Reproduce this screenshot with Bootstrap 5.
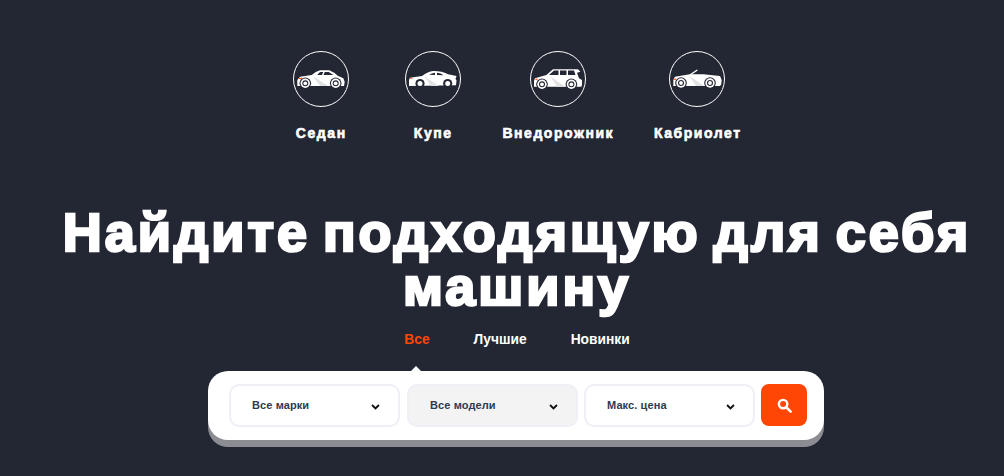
<!DOCTYPE html>
<html lang="ru">
<head>
    <meta charset="UTF-8">
    <meta name="viewport" content="width=device-width, initial-scale=1.0">
    <title>Найдите машину</title>
    <link href="https://cdn.jsdelivr.net/npm/bootstrap@5.3.0/dist/css/bootstrap.min.css" rel="stylesheet">
    <style>
        html { overflow: hidden; }
        body { background: #232733; font-family: "Liberation Sans", Arial, sans-serif; color: #fff; }
        .hero { width: 1034px; padding: 51px 0 36px; }
        .types { column-gap: 40px; margin-left: 2px; }
        .type-item { font-size: 14px; font-weight: 700; color: #fff; text-decoration: none; letter-spacing: 1.55px; text-indent: 1.5px; -webkit-text-stroke: .6px #fff; }
        .type-item svg { display: block; width: 56px; height: 56px; margin-bottom: 16px; }
        .type-sedan { width: 50px; margin-right: 28px; }
        .type-coupe { width: 38px; margin-right: 10px; }
        .type-suv { width: 112px; }
        .type-cabrio { width: 87px; }
        .hero-title { font-family: "Liberation Sans", Arial, sans-serif; font-size: 54px; line-height: 54px; font-weight: 700; letter-spacing: 3px; word-spacing: -5px; -webkit-text-stroke: 2.6px #fff; margin: 61px 0 0; }
        .tabs { column-gap: 44px; margin-top: 19px; font-size: 13.8px; font-weight: 700; line-height: 16px; }
        .tabs a { color: #fff; text-decoration: none; }
        .tabs a.active { color: #ff4605; }
        .search-panel { width: 616px; height: 69px; margin: 23px 0 0 208px; background: #fff; border-radius: 20px; box-shadow: 0 7px 0 #8c8d92; padding: 13px 17px 0 21px; column-gap: 6px; }
        .search-panel::before { content: ""; position: absolute; left: 203px; top: -5px; border: 5px solid transparent; border-top: 0; border-bottom-color: #fff; }
        .search-panel .form-select { flex: 0 0 171px; width: 171px; height: 43px; border: 2px solid #eef0f6; border-radius: 10px; padding: 0 30px 0 21px; font-size: 11px; font-weight: 700; letter-spacing: .1px; color: #2d3a50; background-position: right 18.5px top 18px; background-size: 9px 6px; background-image: url("data:image/svg+xml,%3Csvg xmlns='http://www.w3.org/2000/svg' viewBox='0 0 10 7'%3E%3Cpath d='M1 1.2l4 4 4-4' fill='none' stroke='%23111' stroke-width='2.200'/%3E%3C/svg%3E"); }
        .search-panel .form-select:first-of-type { margin-right: 1px; }
        .search-panel .form-select.muted { background-color: #f3f3f3; }
        .btn-search { width: 46px; height: 42px; padding: 0; border: 0; border-radius: 8px; background: #ff4605; }
        .btn-search:hover { background: #ff4605; }
        .btn-search svg { width: 15px; height: 15px; }
    </style>
</head>
<body>
    <div class="hero text-center">
        <div class="types d-flex justify-content-center align-items-start">
            <a href="#" class="type-item type-sedan d-flex flex-column align-items-center text-nowrap">
                <svg viewBox="0 0 56 56">
                    <circle cx="28" cy="28" r="27.5" fill="none" stroke="#fff"/>
                    <path fill="#fff" d="M4.300 35v-6l2.700-3.300 11.700-1.700q4-3.600 8.300-4.800h9.300q4.500 1.800 8.400 5.500l5.600 2.600 1.400 3.400-.7 4.300z"/>
                    <path fill="#e2e2e5" d="M20 25l15 10h-8z"/>
                    <path fill="#232733" d="M27 21h3.300l-1.400 3h-4.700zM31.800 21h3.900l4.700 3.100H30.500z"/>
                    <path fill="#ff5a1f" d="M6 27l2.800-.4v1.300H5.300z"/>
                    <circle cx="12.300" cy="32.300" r="5.800" fill="#232733"/>
                    <circle cx="12.300" cy="32.300" r="4.700" fill="#fff"/>
                    <circle cx="12.300" cy="32.300" r="3" fill="#232733"/>
                    <circle cx="12.300" cy="32.300" r="1.900" fill="#fff"/>
                    <circle cx="42.700" cy="32.300" r="5.800" fill="#232733"/>
                    <circle cx="42.700" cy="32.300" r="4.700" fill="#fff"/>
                    <circle cx="42.700" cy="32.300" r="3" fill="#232733"/>
                    <circle cx="42.700" cy="32.300" r="1.900" fill="#fff"/>
                </svg>
                Седан
            </a>
            <a href="#" class="type-item type-coupe d-flex flex-column align-items-center text-nowrap">
                <svg viewBox="0 0 56 56">
                    <circle cx="28" cy="28" r="27.500" fill="none" stroke="#fff"/>
                    <path fill="#fff" d="M4 35v-6l1-2.300 12-1.700q6-4.300 11-5 8-.3 15 3.300l8.500 1.700-1 3 1 1.300-.5 5z"/>
                    <path fill="#e2e2e5" d="M19 25l15 10h-8z"/>
                    <path fill="#232733" d="M32 21.800q4 .2 6.500 2.400L32 24zM24 23.800q2.800-1.800 6-2.100V24z"/>
                    <path fill="#ff5a1f" d="M5 27l2.500-.4v1.200H4.700z"/>
                    <circle cx="15" cy="32.500" r="4.600" fill="#232733"/>
                    <circle cx="15" cy="32.500" r="2.500" fill="#fff"/>
                    <circle cx="42.700" cy="32.500" r="4.600" fill="#232733"/>
                    <circle cx="42.700" cy="32.500" r="2.500" fill="#fff"/>
                </svg>
                Купе
            </a>
            <a href="#" class="type-item type-suv d-flex flex-column align-items-center text-nowrap">
                <svg viewBox="0 0 56 56">
                    <circle cx="28" cy="28" r="27.500" fill="none" stroke="#fff"/>
                    <path fill="#fff" d="M4 35.700v-6l1-2.400 11.400-3.300 6.600-5.700h25l2.400 2.400-3.400 1 2 5.600 3 1.700v5l-.7 1.700z"/>
                    <path fill="#e2e2e5" d="M20 25l15 10.700h-8z"/>
                    <path fill="#232733" d="M19 24l5-4.500h4.500V24zM30 19.500h6.500V24H30zM38 19.500h6l1.500 4.500H38z"/>
                    <path fill="#ff5a1f" d="M5.500 28l2-.4v1.400H5.300z"/>
                    <circle cx="12" cy="33.300" r="5.800" fill="#232733"/>
                    <circle cx="12" cy="33.300" r="4.700" fill="#fff"/>
                    <circle cx="12" cy="33.300" r="3" fill="#232733"/>
                    <circle cx="12" cy="33.300" r="1.900" fill="#fff"/>
                    <circle cx="41.400" cy="33.300" r="5.800" fill="#232733"/>
                    <circle cx="41.400" cy="33.300" r="4.700" fill="#fff"/>
                    <circle cx="41.400" cy="33.300" r="3" fill="#232733"/>
                    <circle cx="41.400" cy="33.300" r="1.900" fill="#fff"/>
                </svg>
                Внедорожник
            </a>
            <a href="#" class="type-item type-cabrio d-flex flex-column align-items-center text-nowrap">
                <svg viewBox="0 0 56 56">
                    <circle cx="28" cy="28" r="27.500" fill="none" stroke="#fff"/>
                    <path fill="#fff" d="M4.300 35v-6l1.600-3.300 15-2.400h13.400l16.700 1.700 1.700 4-.5 4.300-1.200 1.700z"/>
                    <path fill="none" stroke="#fff" stroke-width="1.500" d="M21 24l7.300-5"/>
                    <path fill="#e2e2e5" d="M20 24.500l15 10.500h-8z"/>
                    <path fill="#ff5a1f" d="M5 28l2-.4v1.400H4.800z"/>
                    <circle cx="12" cy="32" r="5.800" fill="#232733"/>
                    <circle cx="12" cy="32" r="4.700" fill="#fff"/>
                    <circle cx="12" cy="32" r="3" fill="#232733"/>
                    <circle cx="12" cy="32" r="1.900" fill="#fff"/>
                    <circle cx="41" cy="32" r="5.800" fill="#232733"/>
                    <circle cx="41" cy="32" r="4.700" fill="#fff"/>
                    <circle cx="41" cy="32" r="3" fill="#232733"/>
                    <circle cx="41" cy="32" r="1.900" fill="#fff"/>
                </svg>
                Кабриолет
            </a>
        </div>

        <h1 class="hero-title">Найдите подходящую для себя машину</h1>

        <div class="tabs d-flex justify-content-center">
            <a href="#" class="active">Все</a>
            <a href="#">Лучшие</a>
            <a href="#">Новинки</a>
        </div>

        <form class="search-panel d-flex position-relative">
            <select class="form-select"><option>Все марки</option></select>
            <select class="form-select muted"><option>Все модели</option></select>
            <select class="form-select"><option>Макс. цена</option></select>
            <button type="button" class="btn btn-search flex-shrink-0" aria-label="Поиск">
                <svg viewBox="0 0 16 16"><circle cx="6.500" cy="6.500" r="4.500" fill="none" stroke="#fff" stroke-width="2.600"/><path d="M10 10l4.500 4.500" stroke="#fff" stroke-width="2.800" stroke-linecap="round"/></svg>
            </button>
        </form>
    </div>

    <script src="https://cdn.jsdelivr.net/npm/bootstrap@5.3.0/dist/js/bootstrap.bundle.min.js"></script>
</body>
</html>
